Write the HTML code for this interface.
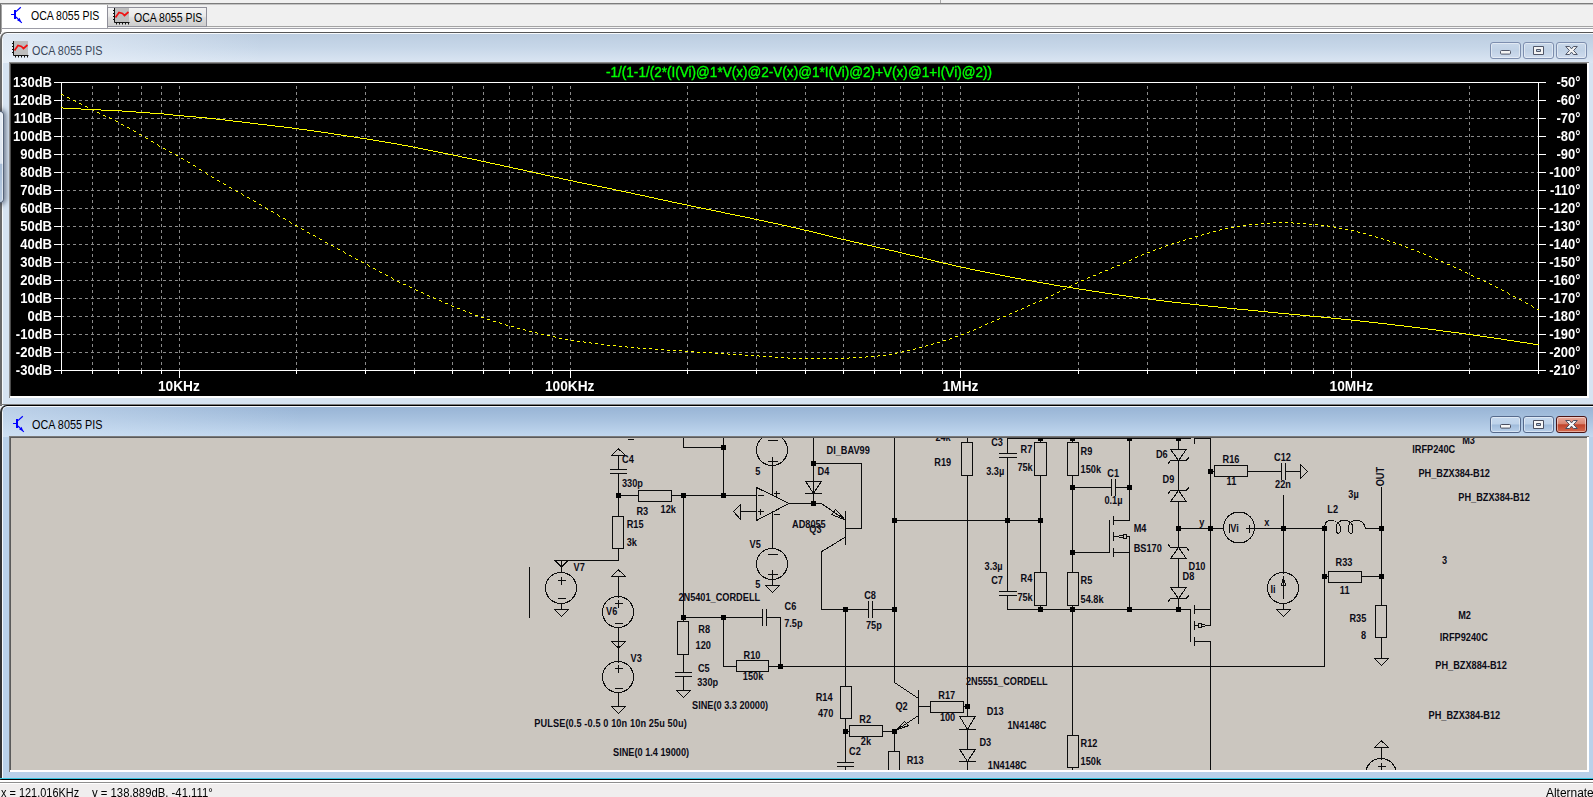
<!DOCTYPE html>
<html><head><meta charset="utf-8"><title>OCA 8055 PIS</title>
<style>
html,body{margin:0;padding:0}
body{width:1593px;height:797px;overflow:hidden;background:#f0f0f0;position:relative;font-family:"Liberation Sans",sans-serif;font-size:11.5px;color:#000}
div,span,svg{position:absolute;box-sizing:border-box}
.t{white-space:nowrap;transform-origin:0 0;line-height:14px}
.btn{width:31px;height:17px;border:1px solid #7d8eae;border-radius:3px;box-shadow:inset 0 0 0 1px rgba(255,255,255,.45)}
</style></head><body>
<!-- top strip -->
<div style="left:0;top:3px;width:1593px;height:1px;background:#7c7c7c"></div>
<div style="left:0;top:4px;width:1593px;height:1px;background:#c4c4c4"></div>
<div style="left:940px;top:0;width:1px;height:3px;background:#a8a8a8"></div>
<div style="left:0;top:26px;width:1593px;height:1px;background:#a3a3a3"></div>
<div style="left:0;top:27px;width:1593px;height:5px;background:#fff"></div>
<div style="left:0;top:27px;width:1593px;height:1px;background:#f4f4f4"></div>
<div style="left:0;top:28px;width:1593px;height:1px;background:#a2a2aa"></div>
<div style="left:0;top:4px;width:1px;height:30px;background:#6c6c6c"></div>
<div style="left:1px;top:5px;width:1px;height:27px;background:#a4a4a4"></div>
<!-- tab 1 -->
<div style="left:2px;top:5px;width:106px;height:27px;background:#fff;border-right:1px solid #a0a0a0"></div>
<div style="left:2px;top:28px;width:106px;height:1px;background:#9c9ca6"></div>
<div style="left:107px;top:29px;width:1px;height:3px;background:#fff"></div>
<svg style="left:10px;top:6px" width="14" height="18" viewBox="0 0 14 18"><path d="M1 8.5H4M6 5.6L10.8 1.2M6 11L11.8 16.8" stroke="#0000ff" stroke-width="1.2" fill="none"/><rect x="4" y="4" width="2" height="9" fill="#0000ff"/><path d="M11 16L7.2 14.4L9.7 11.8Z" fill="#0000ff"/></svg>
<span class="t" style="left:31px;top:9px;font-size:12.3px;transform:scaleX(.855)">OCA 8055 PIS</span>
<!-- tab 2 -->
<div style="left:107px;top:7px;width:100px;height:20px;background:linear-gradient(#f3f3f3,#e9e9e9 45%,#dcdcdc 55%,#cecece);border:1px solid #8f8f99"></div>
<svg style="left:113px;top:8px" width="17" height="17" viewBox="0 0 17 17"><rect x="2" y="0" width="14" height="14" fill="#bdbdbd"/><path d="M1.5 0V14.5H16.5M3.5 14.5V16.5M6.5 14.5V16.5M9.5 14.5V16.5M12.5 14.5V16.5M15.5 14.5V16.5M0 2.5H1.5M0 5.5H1.5M0 8.5H1.5M0 11.5H1.5" stroke="#111" stroke-width="1" fill="none"/><path d="M2.5 9.5L6 4.5L9.5 5.5L11.5 7.5L15.5 4" stroke="#f01010" stroke-width="1.7" fill="none"/></svg>
<span class="t" style="left:134px;top:11px;font-size:12.3px;transform:scaleX(.855)">OCA 8055 PIS</span>

<!-- ============ plot window (inactive) ============ -->
<div style="left:0;top:32px;width:1600px;height:374px;background:#d6e3f1;border:1px solid #565656;border-left:2px solid #6a6a6a;border-bottom:none;border-radius:7px 0 0 0;box-shadow:inset 1px 1px 0 rgba(255,255,255,.8)"></div>
<div style="left:3px;top:34px;width:1599px;height:29px;background:linear-gradient(#bccde0,#c6d6e8 45%,#dbe6f3);border-radius:5px 0 0 0"></div>
<div style="left:3px;top:34px;width:260px;height:29px;background:linear-gradient(90deg,rgba(235,242,250,.75),rgba(235,242,250,0));border-radius:5px 0 0 0"></div>
<div style="left:-2px;top:111px;width:6px;height:92px;background:linear-gradient(#e6edf5,#dbe4ef 57%,#a6bcd6 58%,#b6c9df);border:1px solid #55647a;border-left:none;border-radius:0 4px 4px 0;box-shadow:0 0 5px 2px rgba(40,50,70,.6),inset -1px 0 0 rgba(255,255,255,.6)"></div>
<svg style="left:12px;top:41px" width="17" height="17" viewBox="0 0 17 17"><rect x="2" y="0" width="14" height="14" fill="#bdbdbd"/><path d="M1.5 0V14.5H16.5M3.5 14.5V16.5M6.5 14.5V16.5M9.5 14.5V16.5M12.5 14.5V16.5M15.5 14.5V16.5M0 2.5H1.5M0 5.5H1.5M0 8.5H1.5M0 11.5H1.5" stroke="#111" stroke-width="1" fill="none"/><path d="M2.5 9.5L6 4.5L9.5 5.5L11.5 7.5L15.5 4" stroke="#f01010" stroke-width="1.7" fill="none"/></svg>
<span class="t" style="left:31.5px;top:43.5px;font-size:12.3px;color:#3b485a;transform:scaleX(.88)">OCA 8055 PIS</span>
<div class="btn" style="left:1490px;top:42px;background:linear-gradient(#c9d8ea,#c0d1e5 50%,#cfdcee)"></div>
<div class="btn" style="left:1523px;top:42px;background:linear-gradient(#c9d8ea,#c0d1e5 50%,#cfdcee)"></div>
<div class="btn" style="left:1556px;top:42px;background:linear-gradient(#c9d8ea,#c0d1e5 50%,#cfdcee)"></div>
<svg style="left:1490px;top:42px" width="100" height="17" viewBox="0 0 100 17"><g fill="#f4f4f4" stroke="#505668" stroke-width="1"><rect x="10.5" y="8.5" width="10" height="3.6" rx="1"/><path d="M43.5 4.5h10v8h-10zM46.5 7.5v2h4v-2z" fill-rule="evenodd"/><path d="M75.7 4.5h3.9l1.9 2.4l1.9-2.4h3.9l-3.7 4l3.7 4h-3.9l-1.9-2.4l-1.9 2.4h-3.9l3.7-4z"/></g></svg>
<!-- plot canvas -->
<div style="left:9px;top:62px;width:1580px;height:336px;background:#fff;border-top:1px solid #8c8c8c;border-left:1px solid #8c8c8c"></div>
<div style="left:10px;top:63px;width:1577px;height:333px;background:#000;border-top:1px solid #4c4c4c;border-left:1px solid #4c4c4c"></div>
<svg style="left:0;top:0;will-change:transform" width="1593" height="797" viewBox="0 0 1593 797">
<path d="M92.5 86.0V370.0M118.5 86.0V370.0M141.5 86.0V370.0M161.5 86.0V370.0M179.5 86.0V370.0M296.5 86.0V370.0M365.5 86.0V370.0M414.5 86.0V370.0M452.5 86.0V370.0M483.5 86.0V370.0M509.5 86.0V370.0M532.5 86.0V370.0M552.5 86.0V370.0M570.5 86.0V370.0M687.5 86.0V370.0M756.5 86.0V370.0M805.5 86.0V370.0M843.5 86.0V370.0M874.5 86.0V370.0M900.5 86.0V370.0M922.5 86.0V370.0M942.5 86.0V370.0M960.5 86.0V370.0M1078.5 86.0V370.0M1147.5 86.0V370.0M1196.5 86.0V370.0M1234.5 86.0V370.0M1264.5 86.0V370.0M1291.5 86.0V370.0M1313.5 86.0V370.0M1333.5 86.0V370.0M1351.5 86.0V370.0M1469.5 86.0V370.0M61.0 100.5H1538.0M61.0 118.5H1538.0M61.0 136.5H1538.0M61.0 154.5H1538.0M61.0 172.5H1538.0M61.0 190.5H1538.0M61.0 208.5H1538.0M61.0 226.5H1538.0M61.0 244.5H1538.0M61.0 262.5H1538.0M61.0 280.5H1538.0M61.0 298.5H1538.0M61.0 316.5H1538.0M61.0 334.5H1538.0M61.0 352.5H1538.0" stroke="#8a8a8a" stroke-width="1" stroke-dasharray="3 3" fill="none" shape-rendering="crispEdges"/>
<path d="M53.5 82.5H1546M53.5 370.5H1546M61.5 82.5V370.5M1538.5 82.5V370.5M53.5 100.5H61.5M1538.5 100.5H1546M53.5 118.5H61.5M1538.5 118.5H1546M53.5 136.5H61.5M1538.5 136.5H1546M53.5 154.5H61.5M1538.5 154.5H1546M53.5 172.5H61.5M1538.5 172.5H1546M53.5 190.5H61.5M1538.5 190.5H1546M53.5 208.5H61.5M1538.5 208.5H1546M53.5 226.5H61.5M1538.5 226.5H1546M53.5 244.5H61.5M1538.5 244.5H1546M53.5 262.5H61.5M1538.5 262.5H1546M53.5 280.5H61.5M1538.5 280.5H1546M53.5 298.5H61.5M1538.5 298.5H1546M53.5 316.5H61.5M1538.5 316.5H1546M53.5 334.5H61.5M1538.5 334.5H1546M53.5 352.5H61.5M1538.5 352.5H1546M92.5 370.5V374.0M118.5 370.5V374.0M141.5 370.5V374.0M161.5 370.5V374.0M179.5 370.5V378.0M296.5 370.5V374.0M365.5 370.5V374.0M414.5 370.5V374.0M452.5 370.5V374.0M483.5 370.5V374.0M509.5 370.5V374.0M532.5 370.5V374.0M552.5 370.5V374.0M570.5 370.5V378.0M687.5 370.5V374.0M756.5 370.5V374.0M805.5 370.5V374.0M843.5 370.5V374.0M874.5 370.5V374.0M900.5 370.5V374.0M922.5 370.5V374.0M942.5 370.5V374.0M960.5 370.5V378.0M1078.5 370.5V374.0M1147.5 370.5V374.0M1196.5 370.5V374.0M1234.5 370.5V374.0M1264.5 370.5V374.0M1291.5 370.5V374.0M1313.5 370.5V374.0M1333.5 370.5V374.0M1351.5 370.5V378.0M1469.5 370.5V374.0M61.5 370.5V374.0M1538.5 370.5V374.0" stroke="#fff" stroke-width="1" fill="none" shape-rendering="crispEdges"/>
<path d="M61 107.5H63M63 108.5H81M81 109.5H101M101 110.5H122M122 111.5H136M136 112.5H150M150 113.5H164M164 114.5H173M173 115.5H184M184 116.5H196M196 117.5H207M207 118.5H216M216 119.5H225M225 120.5H233M233 121.5H242M242 122.5H250M250 123.5H258M258 124.5H267M267 125.5H275M275 126.5H284M284 127.5H292M292 128.5H299M299 129.5H307M307 130.5H314M314 131.5H321M321 132.5H328M328 133.5H334M334 134.5H341M341 135.5H347M347 136.5H354M354 137.5H360M360 138.5H367M367 139.5H373M373 140.5H379M379 141.5H385M385 142.5H391M391 143.5H397M397 144.5H402M402 145.5H408M408 146.5H413M413 147.5H418M418 148.5H423M423 149.5H428M428 150.5H433M433 151.5H438M438 152.5H443M443 153.5H448M448 154.5H453M453 155.5H458M458 156.5H462M462 157.5H467M467 158.5H472M472 159.5H477M477 160.5H481M481 161.5H486M486 162.5H490M490 163.5H495M495 164.5H500M500 165.5H504M504 166.5H509M509 167.5H513M513 168.5H518M518 169.5H523M523 170.5H527M527 171.5H532M532 172.5H536M536 173.5H541M541 174.5H545M545 175.5H550M550 176.5H554M554 177.5H559M559 178.5H563M563 179.5H568M568 180.5H573M573 181.5H577M577 182.5H582M582 183.5H587M587 184.5H592M592 185.5H597M597 186.5H602M602 187.5H607M607 188.5H612M612 189.5H616M616 190.5H621M621 191.5H626M626 192.5H631M631 193.5H635M635 194.5H640M640 195.5H645M645 196.5H649M649 197.5H654M654 198.5H658M658 199.5H663M663 200.5H668M668 201.5H672M672 202.5H677M677 203.5H682M682 204.5H687M687 205.5H691M691 206.5H696M696 207.5H701M701 208.5H706M706 209.5H711M711 210.5H716M716 211.5H721M721 212.5H725M725 213.5H730M730 214.5H735M735 215.5H740M740 216.5H745M745 217.5H750M750 218.5H754M754 219.5H759M759 220.5H764M764 221.5H768M768 222.5H773M773 223.5H778M778 224.5H782M782 225.5H787M787 226.5H791M791 227.5H796M796 228.5H800M800 229.5H804M804 230.5H809M809 231.5H813M813 232.5H817M817 233.5H821M821 234.5H825M825 235.5H829M829 236.5H833M833 237.5H837M837 238.5H841M841 239.5H846M846 240.5H850M850 241.5H854M854 242.5H859M859 243.5H863M863 244.5H867M867 245.5H872M872 246.5H876M876 247.5H880M880 248.5H885M885 249.5H889M889 250.5H894M894 251.5H898M898 252.5H902M902 253.5H906M906 254.5H910M910 255.5H915M915 256.5H919M919 257.5H923M923 258.5H927M927 259.5H931M931 260.5H935M935 261.5H939M939 262.5H943M943 263.5H948M948 264.5H952M952 265.5H956M956 266.5H961M961 267.5H966M966 268.5H970M970 269.5H975M975 270.5H980M980 271.5H985M985 272.5H990M990 273.5H995M995 274.5H1000M1000 275.5H1005M1005 276.5H1010M1010 277.5H1015M1015 278.5H1021M1021 279.5H1026M1026 280.5H1032M1032 281.5H1037M1037 282.5H1043M1043 283.5H1049M1049 284.5H1054M1054 285.5H1060M1060 286.5H1067M1067 287.5H1073M1073 288.5H1079M1079 289.5H1086M1086 290.5H1092M1092 291.5H1099M1099 292.5H1105M1105 293.5H1112M1112 294.5H1119M1119 295.5H1126M1126 296.5H1133M1133 297.5H1140M1140 298.5H1148M1148 299.5H1156M1156 300.5H1164M1164 301.5H1172M1172 302.5H1181M1181 303.5H1190M1190 304.5H1199M1199 305.5H1208M1208 306.5H1218M1218 307.5H1227M1227 308.5H1237M1237 309.5H1248M1248 310.5H1258M1258 311.5H1268M1268 312.5H1278M1278 313.5H1289M1289 314.5H1300M1300 315.5H1310M1310 316.5H1321M1321 317.5H1331M1331 318.5H1341M1341 319.5H1351M1351 320.5H1360M1360 321.5H1369M1369 322.5H1378M1378 323.5H1387M1387 324.5H1395M1395 325.5H1404M1404 326.5H1412M1412 327.5H1420M1420 328.5H1428M1428 329.5H1436M1436 330.5H1443M1443 331.5H1451M1451 332.5H1459M1459 333.5H1466M1466 334.5H1473M1473 335.5H1480M1480 336.5H1487M1487 337.5H1494M1494 338.5H1501M1501 339.5H1507M1507 340.5H1514M1514 341.5H1520M1520 342.5H1527M1527 343.5H1533M1533 344.5H1539" stroke="#ffff00" stroke-width="1" fill="none" shape-rendering="crispEdges"/>
<path d="M61 94.5H63M63 95.5H64M67 97.5H69M69 98.5H70M73 100.5H75M75 101.5H76M79 103.5H81M81 104.5H82M85 106.5H87M87 107.5H88M91 109.5H93M93 110.5H94M97 112.5H99M99 113.5H100M103 115.5H105M105 116.5H106M109 117.5H110M110 118.5H112M115 120.5H116M116 121.5H118M121 124.5H123M123 125.5H124M127 127.5H129M129 128.5H130M133 130.5H134M134 131.5H136M139 134.5H141M141 135.5H142M145 137.5H146M146 138.5H148M151 141.5H153M153 142.5H154M157 144.5H158M158 145.5H159M159 146.5H160M163 148.5H165M165 149.5H166M169 151.5H170M170 152.5H172M175 154.5H176M176 155.5H178M181 158.5H183M183 159.5H184M187 161.5H188M188 162.5H190M193 165.5H195M195 166.5H196M199 169.5H201M201 170.5H202M205 172.5H206M206 173.5H207M207 174.5H208M211 176.5H212M212 177.5H214M217 180.5H219M219 181.5H220M223 183.5H224M224 184.5H226M229 187.5H231M231 188.5H232M235 190.5H236M236 191.5H238M241 193.5H242M242 194.5H243M243 195.5H244M247 197.5H249M249 198.5H250M253 200.5H254M254 201.5H256M259 204.5H261M261 205.5H262M265 207.5H266M266 208.5H267M267 209.5H268M271 211.5H273M273 212.5H274M277 214.5H278M278 215.5H279M279 216.5H280M283 218.5H285M285 219.5H286M289 221.5H290M290 222.5H291M291 223.5H292M295 225.5H297M297 226.5H298M301 228.5H302M302 229.5H304M307 232.5H309M309 233.5H310M313 235.5H315M315 236.5H316M319 238.5H320M320 239.5H322M325 242.5H327M327 243.5H328M331 245.5H333M333 246.5H334M337 248.5H338M338 249.5H340M343 251.5H344M344 252.5H345M345 253.5H346M349 255.5H351M351 256.5H352M355 258.5H356M356 259.5H358M361 261.5H362M362 262.5H364M367 264.5H368M368 265.5H369M369 266.5H370M373 268.5H375M375 269.5H376M379 271.5H380M380 272.5H382M385 274.5H386M386 275.5H388M391 277.5H392M392 278.5H393M393 279.5H394M397 281.5H399M399 282.5H400M403 284.5H406M409 286.5H410M410 287.5H412M415 289.5H416M416 290.5H418M421 292.5H423M423 293.5H424M427 295.5H429M429 296.5H430M433 297.5H434M434 298.5H436M439 300.5H441M441 301.5H442M445 303.5H448M451 305.5H452M452 306.5H454M457 308.5H460M463 310.5H465M465 311.5H466M469 312.5H470M470 313.5H472M475 315.5H478M481 317.5H484M487 319.5H490M493 321.5H496M499 322.5H500M500 323.5H502M505 324.5H506M506 325.5H508M511 326.5H514M517 328.5H520M523 329.5H525M525 330.5H526M529 331.5H532M535 332.5H537M537 333.5H538M541 334.5H544M547 335.5H550M553 336.5H555M555 337.5H556M559 338.5H562M565 339.5H568M571 340.5H574M577 341.5H580M583 341.5H584M584 342.5H586M589 342.5H591M591 343.5H592M595 343.5H598M601 344.5H604M607 345.5H610M613 345.5H616M619 346.5H622M625 346.5H627M627 347.5H628M631 347.5H634M637 347.5H638M638 348.5H640M643 348.5H646M649 348.5H652M655 349.5H658M661 349.5H664M667 350.5H670M673 350.5H676M679 350.5H682M685 351.5H688M691 351.5H694M697 352.5H700M703 352.5H706M709 352.5H712M715 353.5H718M721 353.5H724M727 353.5H728M728 354.5H730M733 354.5H736M739 354.5H742M745 355.5H748M751 355.5H754M757 355.5H759M759 356.5H760M763 356.5H766M769 356.5H772M775 357.5H778M781 357.5H784M787 357.5H788M788 358.5H790M793 358.5H796M799 358.5H802M805 358.5H808M811 358.5H814M817 358.5H820M823 358.5H826M829 358.5H832M835 358.5H838M841 358.5H844M847 358.5H849M849 357.5H850M853 357.5H856M859 357.5H862M865 357.5H866M866 356.5H868M871 356.5H874M877 356.5H878M878 355.5H880M883 355.5H886M889 354.5H892M895 353.5H897M897 352.5H898M901 352.5H902M902 351.5H904M907 350.5H910M913 349.5H915M915 348.5H916M919 347.5H922M925 346.5H926M926 345.5H928M931 344.5H933M933 343.5H934M937 342.5H940M943 340.5H946M949 339.5H950M950 338.5H952M955 336.5H958M961 334.5H964M967 332.5H969M969 331.5H970M973 330.5H974M974 329.5H976M979 327.5H981M981 326.5H982M985 324.5H987M987 323.5H988M991 322.5H992M992 321.5H994M997 319.5H999M999 318.5H1000M1003 316.5H1006M1009 314.5H1010M1010 313.5H1012M1015 311.5H1017M1017 310.5H1018M1021 309.5H1022M1022 308.5H1024M1027 306.5H1028M1028 305.5H1030M1033 303.5H1035M1035 302.5H1036M1039 301.5H1040M1040 300.5H1042M1045 298.5H1046M1046 297.5H1048M1051 295.5H1053M1053 294.5H1054M1057 292.5H1059M1059 291.5H1060M1063 289.5H1065M1065 288.5H1066M1069 286.5H1071M1071 285.5H1072M1075 283.5H1077M1077 282.5H1078M1081 280.5H1084M1087 278.5H1088M1088 277.5H1090M1093 275.5H1096M1099 273.5H1100M1100 272.5H1102M1105 270.5H1108M1111 268.5H1112M1112 267.5H1114M1117 265.5H1120M1123 263.5H1124M1124 262.5H1126M1129 260.5H1131M1131 259.5H1132M1135 257.5H1137M1137 256.5H1138M1141 255.5H1142M1142 254.5H1144M1147 252.5H1150M1153 250.5H1155M1155 249.5H1156M1159 248.5H1161M1161 247.5H1162M1165 246.5H1166M1166 245.5H1168M1171 244.5H1172M1172 243.5H1174M1177 242.5H1179M1179 241.5H1180M1183 240.5H1185M1185 239.5H1186M1189 238.5H1192M1195 236.5H1198M1201 235.5H1202M1202 234.5H1204M1207 233.5H1209M1209 232.5H1210M1213 231.5H1216M1219 230.5H1220M1220 229.5H1222M1225 228.5H1228M1231 227.5H1234M1237 226.5H1240M1243 225.5H1246M1249 224.5H1252M1255 224.5H1258M1261 223.5H1264M1267 223.5H1270M1273 222.5H1276M1279 222.5H1282M1285 222.5H1288M1291 222.5H1293M1293 223.5H1294M1297 223.5H1300M1303 223.5H1306M1309 224.5H1312M1315 224.5H1318M1321 225.5H1324M1327 225.5H1328M1328 226.5H1330M1333 226.5H1334M1334 227.5H1336M1339 228.5H1342M1345 229.5H1348M1351 230.5H1354M1357 231.5H1358M1358 232.5H1360M1363 233.5H1366M1369 235.5H1372M1375 236.5H1376M1376 237.5H1378M1381 238.5H1383M1383 239.5H1384M1387 240.5H1389M1389 241.5H1390M1393 242.5H1395M1395 243.5H1396M1399 244.5H1401M1401 245.5H1402M1405 246.5H1406M1406 247.5H1408M1411 249.5H1414M1417 251.5H1419M1419 252.5H1420M1423 253.5H1424M1424 254.5H1426M1429 256.5H1431M1431 257.5H1432M1435 258.5H1436M1436 259.5H1438M1441 261.5H1443M1443 262.5H1444M1447 264.5H1450M1453 266.5H1454M1454 267.5H1456M1459 269.5H1461M1461 270.5H1462M1465 272.5H1467M1467 273.5H1468M1471 275.5H1473M1473 276.5H1474M1477 278.5H1480M1483 280.5H1484M1484 281.5H1486M1489 283.5H1490M1490 284.5H1492M1495 286.5H1496M1496 287.5H1498M1501 289.5H1502M1502 290.5H1504M1507 292.5H1508M1508 293.5H1509M1509 294.5H1510M1513 296.5H1515M1515 297.5H1516M1519 299.5H1521M1521 300.5H1522M1525 302.5H1526M1526 303.5H1528M1531 305.5H1532M1532 306.5H1533M1533 307.5H1534M1537 309.5H1539" stroke="#ffff00" stroke-width="1" fill="none" shape-rendering="crispEdges"/>
<g font-family="'Liberation Sans',sans-serif" font-weight="bold" font-size="13.8" fill="#fff"><text transform="translate(52,87.1) scale(0.945,1)" text-anchor="end">130dB</text><text transform="translate(1580.5,87.1) scale(0.945,1)" text-anchor="end">-50°</text><text transform="translate(52,105.1) scale(0.945,1)" text-anchor="end">120dB</text><text transform="translate(1580.5,105.1) scale(0.945,1)" text-anchor="end">-60°</text><text transform="translate(52,123.1) scale(0.945,1)" text-anchor="end">110dB</text><text transform="translate(1580.5,123.1) scale(0.945,1)" text-anchor="end">-70°</text><text transform="translate(52,141.1) scale(0.945,1)" text-anchor="end">100dB</text><text transform="translate(1580.5,141.1) scale(0.945,1)" text-anchor="end">-80°</text><text transform="translate(52,159.1) scale(0.945,1)" text-anchor="end">90dB</text><text transform="translate(1580.5,159.1) scale(0.945,1)" text-anchor="end">-90°</text><text transform="translate(52,177.1) scale(0.945,1)" text-anchor="end">80dB</text><text transform="translate(1580.5,177.1) scale(0.945,1)" text-anchor="end">-100°</text><text transform="translate(52,195.1) scale(0.945,1)" text-anchor="end">70dB</text><text transform="translate(1580.5,195.1) scale(0.945,1)" text-anchor="end">-110°</text><text transform="translate(52,213.1) scale(0.945,1)" text-anchor="end">60dB</text><text transform="translate(1580.5,213.1) scale(0.945,1)" text-anchor="end">-120°</text><text transform="translate(52,231.1) scale(0.945,1)" text-anchor="end">50dB</text><text transform="translate(1580.5,231.1) scale(0.945,1)" text-anchor="end">-130°</text><text transform="translate(52,249.1) scale(0.945,1)" text-anchor="end">40dB</text><text transform="translate(1580.5,249.1) scale(0.945,1)" text-anchor="end">-140°</text><text transform="translate(52,267.1) scale(0.945,1)" text-anchor="end">30dB</text><text transform="translate(1580.5,267.1) scale(0.945,1)" text-anchor="end">-150°</text><text transform="translate(52,285.1) scale(0.945,1)" text-anchor="end">20dB</text><text transform="translate(1580.5,285.1) scale(0.945,1)" text-anchor="end">-160°</text><text transform="translate(52,303.1) scale(0.945,1)" text-anchor="end">10dB</text><text transform="translate(1580.5,303.1) scale(0.945,1)" text-anchor="end">-170°</text><text transform="translate(52,321.1) scale(0.945,1)" text-anchor="end">0dB</text><text transform="translate(1580.5,321.1) scale(0.945,1)" text-anchor="end">-180°</text><text transform="translate(52,339.1) scale(0.945,1)" text-anchor="end">-10dB</text><text transform="translate(1580.5,339.1) scale(0.945,1)" text-anchor="end">-190°</text><text transform="translate(52,357.1) scale(0.945,1)" text-anchor="end">-20dB</text><text transform="translate(1580.5,357.1) scale(0.945,1)" text-anchor="end">-200°</text><text transform="translate(52,375.1) scale(0.945,1)" text-anchor="end">-30dB</text><text transform="translate(1580.5,375.1) scale(0.945,1)" text-anchor="end">-210°</text><text transform="translate(178.9,391.3) scale(0.995,1)" text-anchor="middle">10KHz</text><text transform="translate(569.7,391.3) scale(0.995,1)" text-anchor="middle">100KHz</text><text transform="translate(960.5,391.3) scale(0.995,1)" text-anchor="middle">1MHz</text><text transform="translate(1351.3,391.3) scale(0.995,1)" text-anchor="middle">10MHz</text></g>
<text x="799" y="77" text-anchor="middle" font-family="'Liberation Sans',sans-serif" font-weight="normal" font-size="14" fill="#00ff00" stroke="#00ff00" stroke-width="0.4" textLength="386" lengthAdjust="spacingAndGlyphs">-1/(1-1/(2*(I(Vi)@1*V(x)@2-V(x)@1*I(Vi)@2)+V(x)@1+I(Vi)@2))</text>
</svg>

<!-- ============ schematic window (active) ============ -->
<div style="left:0;top:404px;width:1600px;height:1px;background:#7e7e7e"></div>
<div style="left:0;top:405px;width:1600px;height:375px;background:#b9d1ea;border:1px solid #000;border-left:2px solid #333;border-radius:7px 0 0 0;box-shadow:inset 1px 1px 0 rgba(255,255,255,.85)"></div>
<div style="left:3px;top:407px;width:1599px;height:30px;background:linear-gradient(#98b4d5,#a9c3e0 45%,#c3d9f0);border-radius:5px 0 0 0"></div>
<div style="left:3px;top:407px;width:300px;height:30px;background:linear-gradient(90deg,rgba(215,230,246,.55),rgba(215,230,246,0));border-radius:5px 0 0 0"></div>
<div style="left:0;top:778px;width:1593px;height:1px;background:#35c3de"></div>
<svg style="left:12px;top:415px" width="14" height="18" viewBox="0 0 14 18"><path d="M1 8.5H4M6 5.6L10.8 1.2M6 11L11.8 16.8" stroke="#0000ff" stroke-width="1.2" fill="none"/><rect x="4" y="4" width="2" height="9" fill="#0000ff"/><path d="M11 16L7.2 14.4L9.7 11.8Z" fill="#0000ff"/></svg>
<span class="t" style="left:31.5px;top:418px;font-size:12.3px;color:#000;transform:scaleX(.88)">OCA 8055 PIS</span>
<div class="btn" style="left:1490px;top:416px;border-color:#566a8c;background:linear-gradient(#c6d9ee,#bdd2ea 48%,#9fbbdb 52%,#b9d0ea)"></div>
<div class="btn" style="left:1523px;top:416px;border-color:#566a8c;background:linear-gradient(#c6d9ee,#bdd2ea 48%,#9fbbdb 52%,#b9d0ea)"></div>
<div class="btn" style="left:1556px;top:416px;border-color:#4b1414;background:linear-gradient(#e8aa9c,#d98570 45%,#c0442b 52%,#d46a4e)"></div>
<svg style="left:1490px;top:416px" width="100" height="17" viewBox="0 0 100 17"><g fill="#f7f7f7" stroke="#4a4f60" stroke-width="1"><rect x="10.5" y="8.5" width="10" height="3.6" rx="1"/><path d="M43.5 4.5h10v8h-10zM46.5 7.5v2h4v-2z" fill-rule="evenodd"/><path d="M75.7 4.5h3.9l1.9 2.4l1.9-2.4h3.9l-3.7 4l3.7 4h-3.9l-1.9-2.4l-1.9 2.4h-3.9l3.7-4z"/></g></svg>
<!-- schematic canvas -->
<div style="left:9px;top:436px;width:1580px;height:336px;background:#fff;border-top:1px solid #7a7a7a;border-left:1px solid #7a7a7a"></div>
<div style="left:10px;top:437px;width:1577px;height:333px;background:#cbc6bf;border-top:1px solid #5a5a5a;border-left:1px solid #5a5a5a"></div>
<svg style="left:11px;top:438px" width="1576" height="332" viewBox="11 438 1576 332">
<g stroke="#0c0c0c" stroke-width="1" fill="none"><path shape-rendering="crispEdges" stroke-linecap="square" d="M529.5 567.5L529.5 617.5M558.0 580.5H565.5M561.5 577.0V584.5M558.0 598.5H565.5M561.5 560.5L561.5 572.5M561.5 603.5L561.5 609.5M561.5 560.5L618.5 560.5L618.5 548.5M618.5 455.5L618.5 469.5M610.5 469.5H626.5M610.5 473.5H626.5M618.5 473.5L618.5 516.5M612.5 516.5H623.5V548.5H612.5ZM628.0 439.5H633.5M618.5 495.5L638.5 495.5M638.5 490.5H671.5V501.5H638.5ZM671.5 495.5L756.5 495.5M683.5 437.5L683.5 447.5L723.5 447.5M723.5 437.5L723.5 495.5M683.5 495.5L683.5 621.5M618.5 576.5L618.5 597.5M615.0 603.5H622.5M618.5 600.0V607.5M615.0 623.5H622.5M618.5 628.5L618.5 662.5M615.0 668.5H622.5M618.5 665.0V672.5M615.0 688.5H622.5M618.5 693.5L618.5 706.5M677.5 621.5H688.5V654.5H677.5ZM683.5 654.5L683.5 672.5M675.5 672.5H691.5M675.5 676.5H691.5M683.5 676.5L683.5 690.5M683.5 617.5L762.5 617.5M762.5 609.5V625.5M766.5 609.5V625.5M766.5 617.5L780.5 617.5L780.5 666.5M723.5 617.5L723.5 666.5L736.5 666.5M736.5 660.5H768.5V671.5H736.5ZM768.5 666.5L1324.5 666.5L1324.5 528.5M768.5 440.5H777.0M768.5 461.5H777.0M772.5 457.5V466.0M772.5 465.5L772.5 495.5M789.5 503.5L813.5 503.5M758.0 495.5H763.5M758.0 511.5H763.5M760.5 509.0V514.5M774.3 493.5H779.2M776.5 491.3V496.2M774.3 514.5H779.2M740.5 511.5L756.5 511.5M772.5 511.5L772.5 548.5M768.5 554.5H777.0M768.5 574.5H777.0M772.5 570.5V579.0M772.5 579.5L772.5 585.5M813.5 437.5L813.5 503.5M805.7 493.5H821.3M813.5 463.5L861.5 463.5L861.5 528.5L845.5 528.5M845.5 511.5L845.5 544.5M813.5 503.5L821.5 503.5M821.5 552.5L821.5 609.5L868.5 609.5M868.5 601.5V617.5M872.5 601.5V617.5M872.5 609.5L894.5 609.5M845.5 609.5L845.5 686.5M840.5 686.5H851.5V718.5H840.5ZM845.5 718.5L845.5 762.5M837.5 762.5H853.5M837.5 766.5H853.5M845.5 766.5L845.5 771.5M845.5 731.5L849.5 731.5M849.5 725.5H882.5V736.5H849.5ZM882.5 731.5L894.5 731.5M894.5 731.5L894.5 751.5M888.5 751.5H899.5V785.5H888.5ZM894.5 437.5L894.5 682.5M918.5 690.5L918.5 723.5M918.5 706.5L930.5 706.5M930.5 701.5H963.5V712.5H930.5ZM963.5 706.5L967.5 706.5M967.5 437.5L967.5 442.5M961.5 442.5H972.5V475.5H961.5ZM967.5 475.5L967.5 716.5M959.7 729.5H975.3M967.5 729.5L967.5 749.5M959.7 761.5H975.3M967.5 761.5L967.5 771.5M894.5 520.5L1040.5 520.5M1007.5 438.5L1007.5 453.5M999.5 453.5H1016.5M999.5 457.5H1016.5M1007.5 457.5L1007.5 591.5M999.5 591.5H1016.5M999.5 595.5H1016.5M1007.5 595.5L1007.5 609.5L1190.5 609.5M1007.5 438.5L1190.5 438.5M1034.5 442.5H1046.5V475.5H1034.5ZM1040.5 475.5L1040.5 572.5M1034.5 572.5H1046.5V605.5H1034.5ZM1040.5 605.5L1040.5 609.5M1040.5 438.5L1040.5 442.5M1072.5 438.5L1072.5 442.5M1067.5 442.5H1078.5V475.5H1067.5ZM1072.5 475.5L1072.5 572.5M1067.5 572.5H1078.5V605.5H1067.5ZM1072.5 605.5L1072.5 735.5M1067.5 735.5H1078.5V767.5H1067.5ZM1072.5 767.5L1072.5 771.5M1072.5 487.5L1111.5 487.5M1111.5 479.5V495.5M1115.5 479.5V495.5M1115.5 487.5L1129.5 487.5M1129.5 438.5L1129.5 520.5L1113.5 520.5M1109.5 520.5L1109.5 552.5M1113.5 516.5L1113.5 524.5M1113.5 532.5L1113.5 540.5M1113.5 548.5L1113.5 556.5M1072.5 552.5L1109.5 552.5M1113.5 552.5L1129.5 552.5M1129.5 536.5L1129.5 609.5M1126.5 536.5L1129.5 536.5M1178.5 438.5L1178.5 449.5M1178.5 460.5L1178.5 490.5M1178.5 501.5L1178.5 547.5M1178.5 558.5L1178.5 587.5M1178.5 598.5L1178.5 609.5M1178.5 528.5L1223.5 528.5M1194.5 438.5L1194.5 443.5M1194.5 438.5L1210.5 438.5L1210.5 625.5M1190.5 609.5L1190.5 641.5M1194.5 605.5L1194.5 613.5M1194.5 621.5L1194.5 629.5M1194.5 637.5L1194.5 645.5M1194.5 609.5L1210.5 609.5M1207.5 625.5L1210.5 625.5M1194.5 641.5L1210.5 641.5L1210.5 771.5M1210.5 471.5L1214.5 471.5M1214.5 465.5H1247.5V476.5H1214.5ZM1247.5 471.5L1281.5 471.5M1281.5 463.5V479.5M1285.5 463.5V479.5M1285.5 471.5L1300.5 471.5M1254.5 528.5L1324.5 528.5M1229.5 524.5V532.5M1246.0 528.5H1253.5M1249.5 525.0V532.5M1283.5 495.5L1283.5 573.5M1283.5 579.5L1283.5 598.5M1283.5 604.5L1283.5 609.5M1381.5 487.5L1381.5 605.5M1375.5 605.5H1386.5V637.5H1375.5ZM1381.5 637.5L1381.5 658.5M1324.5 576.5L1328.5 576.5M1328.5 571.5H1361.5V582.5H1328.5ZM1361.5 576.5L1381.5 576.5M1381.5 747.5L1381.5 759.5M1378.0 766.5H1385.5M1381.5 763.0V770.5"/><path shape-rendering="crispEdges" d="M545.5 588.0a15.5 15.5 0 1 0 31.0 0a15.5 15.5 0 1 0 -31.0 0M554.7 560.5H568.3L561.5 566.8ZM554.3 609.5H568.7L561.5 616.8ZM611.3 455.5H625.7L618.5 448.9ZM611.3 576.5H625.7L618.5 569.9ZM602.5 612.0a15.5 15.5 0 1 0 31.0 0a15.5 15.5 0 1 0 -31.0 0M611.3 641.5H625.7L618.5 648.0ZM602.5 677.0a15.5 15.5 0 1 0 31.0 0a15.5 15.5 0 1 0 -31.0 0M611.3 706.5H625.7L618.5 713.8ZM676.3 690.5H690.7L683.5 697.8ZM756.5 450.0a15.5 15.5 0 1 0 31.0 0a15.5 15.5 0 1 0 -31.0 0M756.5 487.5V520.5L789 503.5ZM740.5 504.5V519.5L733.5 511.5ZM756.5 564.0a15.5 15.5 0 1 0 31.0 0a15.5 15.5 0 1 0 -31.0 0M765.3 585.5H779.7L772.5 592.8ZM805.7 481.5H821.3L813.5 493.5ZM821.5 503.5L845.5 520.3M845 519.9L835.6 509.3L831.9 514.6ZM845.5 537L821.5 551.7M894.5 682.5L918.5 698.5M918.5 715.5L894.5 731.5M896.8 729.7L904.6 721.5L908.6 725.6ZM959.7 716.5H975.3L967.5 729.5ZM959.7 749.5H975.3L967.5 761.5ZM1114 536.5H1116L1123.5 535.3V537.7L1116 536.5M1123.5 534.5H1126.5V538.5H1123.5ZM1170.7 449.5H1186.3L1178.5 460.5ZM1168.2 463.3L1170.7 460.5H1186.3L1188.8 457.7M1170.7 501.5H1186.3L1178.5 490.5ZM1168.2 493.3L1170.7 490.5H1186.3L1188.8 487.7M1170.7 558.5H1186.3L1178.5 547.5ZM1168.2 544.7L1170.7 547.5H1186.3L1188.8 550.3M1170.7 587.5H1186.3L1178.5 598.5ZM1168.2 601.3L1170.7 598.5H1186.3L1188.8 595.7M1195 625.5H1198.5M1198.5 623.5H1201.5V627.5H1198.5ZM1201.5 624.3L1208 625.5L1201.5 626.7M1300.5 464.5V478.5L1307.5 471.5ZM1223.5 527.5a15.5 15.5 0 1 0 31.0 0a15.5 15.5 0 1 0 -31.0 0M1267.5 588.0a15.5 15.5 0 1 0 31.0 0a15.5 15.5 0 1 0 -31.0 0M1283.5 578L1281.3 585H1285.7ZM1276.3 609.5H1290.7L1283.5 616.8ZM1324.5 528.5C1324.5 524 1326 520.5 1330.5 520.5C1337 520.5 1340.5 524 1340.5 529C1340.5 535 1336 535 1336 528C1336 523 1339 520.5 1344 520.5C1350 520.5 1353 524 1353 529C1353 535 1348.5 535 1348.5 528C1348.5 523 1352 520.5 1357 520.5C1362 520.5 1364.5 524 1365.5 528.5H1381.5M1374.3 658.5H1388.7L1381.5 665.8ZM1374.3 747.5H1388.7L1381.5 740.9ZM1365.5 774.0a15.5 15.5 0 1 0 31.0 0a15.5 15.5 0 1 0 -31.0 0"/></g><g fill="#000" shape-rendering="crispEdges"><rect x="616" y="493" width="5" height="5"/><rect x="681" y="493" width="5" height="5"/><rect x="721" y="493" width="5" height="5"/><rect x="721" y="445" width="5" height="5"/><rect x="681" y="615" width="5" height="5"/><rect x="721" y="615" width="5" height="5"/><rect x="778" y="664" width="5" height="5"/><rect x="811" y="461" width="5" height="5"/><rect x="811" y="501" width="5" height="5"/><rect x="843" y="607" width="5" height="5"/><rect x="892" y="607" width="5" height="5"/><rect x="843" y="729" width="5" height="5"/><rect x="892" y="729" width="5" height="5"/><rect x="892" y="518" width="5" height="5"/><rect x="965" y="704" width="5" height="5"/><rect x="1005" y="518" width="5" height="5"/><rect x="1038" y="518" width="5" height="5"/><rect x="1038" y="436" width="5" height="5"/><rect x="1038" y="607" width="5" height="5"/><rect x="1070" y="436" width="5" height="5"/><rect x="1070" y="607" width="5" height="5"/><rect x="1127" y="436" width="5" height="5"/><rect x="1127" y="607" width="5" height="5"/><rect x="1176" y="436" width="5" height="5"/><rect x="1176" y="607" width="5" height="5"/><rect x="1070" y="485" width="5" height="5"/><rect x="1070" y="550" width="5" height="5"/><rect x="1127" y="485" width="5" height="5"/><rect x="1176" y="526" width="5" height="5"/><rect x="1208" y="526" width="5" height="5"/><rect x="1208" y="469" width="5" height="5"/><rect x="1281" y="526" width="5" height="5"/><rect x="1322" y="526" width="5" height="5"/><rect x="1379" y="526" width="5" height="5"/><rect x="1379" y="574" width="5" height="5"/><rect x="1322" y="574" width="5" height="5"/></g><g font-family="'Liberation Sans',sans-serif" font-weight="bold" font-size="10.05" fill="#0b0b16"><text transform="translate(573.5 571.0) scale(0.915 1)">V7</text><text transform="translate(622.0 463.1) scale(0.915 1)">C4</text><text transform="translate(622.0 487.1) scale(0.915 1)">330p</text><text transform="translate(626.7 527.7) scale(0.915 1)">R15</text><text transform="translate(626.7 545.5) scale(0.915 1)">3k</text><text transform="translate(636.4 514.7) scale(0.915 1)">R3</text><text transform="translate(660.6 512.9) scale(0.915 1)">12k</text><text transform="translate(606.0 615.0) scale(0.915 1)">V6</text><text transform="translate(630.5 661.9) scale(0.915 1)">V3</text><text transform="translate(534.3 727.3) scale(0.915 1)" textLength="166.7">PULSE(0.5 -0.5 0 10n 10n 25u 50u)</text><text transform="translate(613.0 756.1) scale(0.915 1)">SINE(0 1.4 19000)</text><text transform="translate(692.0 709.2) scale(0.915 1)">SINE(0 3.3 20000)</text><text transform="translate(678.4 601.3) scale(0.915 1)">2N5401_CORDELL</text><text transform="translate(698.3 633.0) scale(0.915 1)">R8</text><text transform="translate(695.6 648.8) scale(0.915 1)">120</text><text transform="translate(697.9 671.9) scale(0.915 1)">C5</text><text transform="translate(697.2 685.9) scale(0.915 1)">330p</text><text transform="translate(743.5 659.1) scale(0.915 1)">R10</text><text transform="translate(742.8 679.9) scale(0.915 1)">150k</text><text transform="translate(784.6 610.3) scale(0.915 1)">C6</text><text transform="translate(784.2 626.5) scale(0.915 1)">7.5p</text><text transform="translate(755.3 474.5) scale(0.915 1)">5</text><text transform="translate(749.5 547.9) scale(0.915 1)">V5</text><text transform="translate(755.3 588.1) scale(0.915 1)">5</text><text transform="translate(792.0 527.9) scale(0.915 1)">AD8055</text><text transform="translate(809.3 533.4) scale(0.915 1)">Q3</text><text transform="translate(817.5 474.7) scale(0.915 1)">D4</text><text transform="translate(826.5 453.8) scale(0.915 1)">DI_BAV99</text><text transform="translate(864.2 598.9) scale(0.915 1)">C8</text><text transform="translate(866.0 629.1) scale(0.915 1)">75p</text><text transform="translate(815.7 701.1) scale(0.915 1)">R14</text><text transform="translate(818.0 717.0) scale(0.915 1)">470</text><text transform="translate(859.3 722.7) scale(0.915 1)">R2</text><text transform="translate(860.8 744.9) scale(0.915 1)">2k</text><text transform="translate(849.1 755.0) scale(0.915 1)">C2</text><text transform="translate(906.7 763.8) scale(0.915 1)">R13</text><text transform="translate(895.4 709.9) scale(0.915 1)">Q2</text><text transform="translate(938.3 699.0) scale(0.915 1)">R17</text><text transform="translate(939.9 720.9) scale(0.915 1)">100</text><text transform="translate(934.3 466.1) scale(0.915 1)">R19</text><text transform="translate(935.4 440.7) scale(0.915 1)">24k</text><text transform="translate(986.7 715.0) scale(0.915 1)">D13</text><text transform="translate(1007.5 729.0) scale(0.915 1)">1N4148C</text><text transform="translate(979.4 745.9) scale(0.915 1)">D3</text><text transform="translate(987.8 769.0) scale(0.915 1)">1N4148C</text><text transform="translate(965.9 685.3) scale(0.915 1)">2N5551_CORDELL</text><text transform="translate(991.2 445.7) scale(0.915 1)">C3</text><text transform="translate(986.2 474.9) scale(0.915 1)">3.3µ</text><text transform="translate(984.6 570.1) scale(0.915 1)">3.3µ</text><text transform="translate(991.2 583.5) scale(0.915 1)">C7</text><text transform="translate(1020.5 453.1) scale(0.915 1)">R7</text><text transform="translate(1017.4 470.5) scale(0.915 1)">75k</text><text transform="translate(1020.5 581.9) scale(0.915 1)">R4</text><text transform="translate(1017.4 600.5) scale(0.915 1)">75k</text><text transform="translate(1080.6 454.9) scale(0.915 1)">R9</text><text transform="translate(1080.6 473.0) scale(0.915 1)">150k</text><text transform="translate(1080.6 583.7) scale(0.915 1)">R5</text><text transform="translate(1080.6 602.9) scale(0.915 1)">54.8k</text><text transform="translate(1080.6 746.8) scale(0.915 1)">R12</text><text transform="translate(1080.6 765.1) scale(0.915 1)">150k</text><text transform="translate(1107.3 476.8) scale(0.915 1)">C1</text><text transform="translate(1104.4 503.9) scale(0.915 1)">0.1µ</text><text transform="translate(1133.7 531.7) scale(0.915 1)">M4</text><text transform="translate(1133.7 551.8) scale(0.915 1)">BS170</text><text transform="translate(1155.9 457.9) scale(0.915 1)">D6</text><text transform="translate(1162.6 482.7) scale(0.915 1)">D9</text><text transform="translate(1188.6 569.9) scale(0.915 1)">D10</text><text transform="translate(1182.5 580.3) scale(0.915 1)">D8</text><text transform="translate(1199.2 525.5) scale(0.915 1)">y</text><text transform="translate(1222.5 462.8) scale(0.915 1)">R16</text><text transform="translate(1226.6 485.1) scale(0.915 1)">11</text><text transform="translate(1274.0 461.0) scale(0.915 1)">C12</text><text transform="translate(1275.1 487.7) scale(0.915 1)">22n</text><text transform="translate(1230.3 532.1) scale(0.915 1)">Vi</text><text transform="translate(1264.3 526.0) scale(0.915 1)">x</text><text transform="translate(1270.4 592.5) scale(0.915 1)">Ii</text><text transform="translate(1327.3 513.0) scale(0.915 1)">L2</text><text transform="translate(1348.3 497.8) scale(0.915 1)">3µ</text><text transform="translate(1335.5 565.6) scale(0.915 1)">R33</text><text transform="translate(1339.8 593.8) scale(0.915 1)">11</text><text transform="translate(1349.4 621.8) scale(0.915 1)">R35</text><text transform="translate(1361.0 638.7) scale(0.915 1)">8</text><text transform="translate(1384,486.3) rotate(-90) scale(0.915 1)">OUT</text><text transform="translate(1462.2 444.3) scale(0.915 1)">M3</text><text transform="translate(1412.3 453.1) scale(0.915 1)">IRFP240C</text><text transform="translate(1418.4 477.3) scale(0.915 1)">PH_BZX384-B12</text><text transform="translate(1458.3 501.2) scale(0.915 1)">PH_BZX384-B12</text><text transform="translate(1442.1 563.8) scale(0.915 1)">3</text><text transform="translate(1458.2 618.8) scale(0.915 1)">M2</text><text transform="translate(1439.8 641.3) scale(0.915 1)">IRFP9240C</text><text transform="translate(1435.3 669.0) scale(0.915 1)">PH_BZX884-B12</text><text transform="translate(1428.6 719.1) scale(0.915 1)">PH_BZX384-B12</text></g>
</svg>

<!-- status bar -->
<div style="left:0;top:780px;width:1593px;height:17px;background:#f0eeee"></div>
<div style="left:0;top:780px;width:1593px;height:4px;background:#fff"></div>
<div style="left:0;top:782px;width:1593px;height:1px;background:#8e8e8e"></div>
<span class="t" style="left:1px;top:785.5px;font-size:12.3px;transform:scaleX(.89)">x = 121.016KHz</span>
<span class="t" style="left:92px;top:785.5px;font-size:12.3px;transform:scaleX(.92)">y = 138.889dB, -41.111°</span>
<span class="t" style="left:1546px;top:785.5px;font-size:12.3px;transform:scaleX(.97)">Alternate</span>
</body></html>
